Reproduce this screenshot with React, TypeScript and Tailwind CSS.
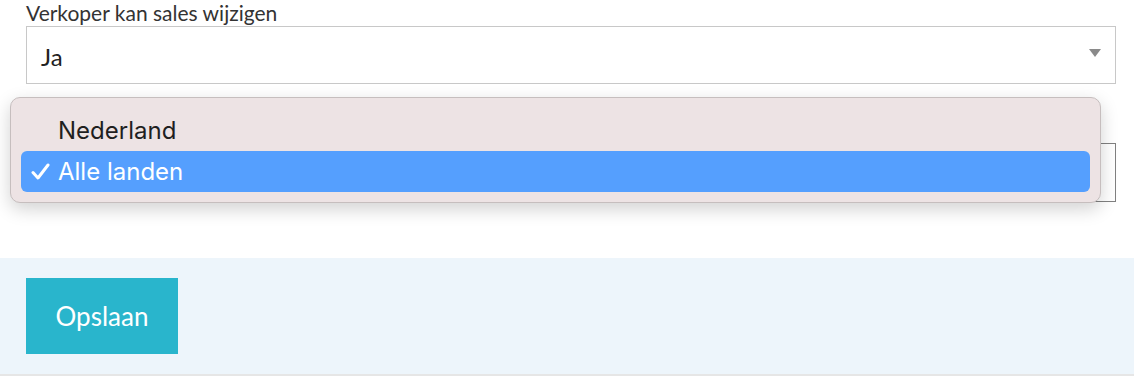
export default function App() {
  return (
    <div className="relative w-full h-[376px] bg-white overflow-hidden font-['Lato',sans-serif] text-[#333]">
      {/* Form fields */}
      <div className="pl-[26px] pr-[18px]">
        <label className="block text-[21px] leading-[26px] text-[#333]">Verkoper kan sales wijzigen</label>
        <div className="h-[58px] border border-[#c8c8c8] bg-white flex items-center justify-between pl-[14px] pr-[14px]">
          <span className="text-[24px] leading-[24px] text-[#222] pt-[4px]">Ja</span>
          <svg width="12" height="8" viewBox="0 0 12 8" className="mb-[4px]">
            <path d="M0 0 H12 L6 8 Z" fill="#8a8a8a" />
          </svg>
        </div>

        <label className="block mt-[18px] text-[21px] leading-[20px] text-[#333]">Land</label>
        <div className="mt-[21px] h-[59px] border border-[#808080] bg-white" />
      </div>

      {/* Footer */}
      <div className="mt-[56px] h-[118px] bg-[#edf5fb] border-b-2 border-[#e6e6e6] pt-[20px] px-[26px]">
        <button className="w-[152px] h-[76px] bg-[#29b5cc] text-white text-[26px] flex items-center justify-center">
          Opslaan
        </button>
      </div>

      {/* Native select popup */}
      <div className="absolute left-[10px] top-[97px] w-[1091px] h-[106px] rounded-[10px] bg-[#ede3e4] border border-[#c6bebe] shadow-[0_6px_18px_rgba(0,0,0,0.18)] px-[10px] pt-[12px] font-['Inter',sans-serif]">
        <div className="h-[41px] flex items-center pl-[37px] text-[24px] text-[#1f1f1f]">Nederland</div>
        <div className="h-[41px] rounded-[6px] bg-[#559ffe] flex items-center text-white text-[24px]">
          <svg width="19" height="17" viewBox="0 0 19 17" className="ml-[10px] mr-[8px]">
            <path d="M2 9.5 L7 15 L17 2" fill="none" stroke="white" strokeWidth="3" strokeLinecap="round" strokeLinejoin="round" />
          </svg>
          <span>Alle landen</span>
        </div>
      </div>
    </div>
  );
}
